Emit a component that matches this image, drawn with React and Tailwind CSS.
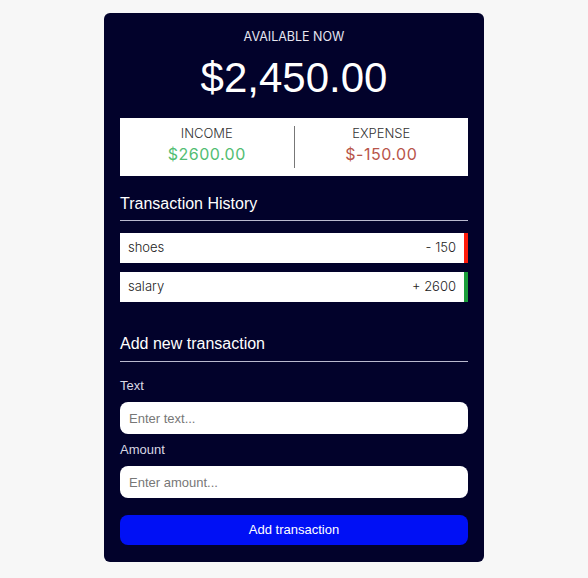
export default function App() {
  const lib = { fontFamily: "'Liberation Sans', Arial, sans-serif" };
  return (
    <div className="min-h-[578px] w-full bg-[#f7f7f7] pt-[13px]" style={{ fontFamily: "Inter, 'Liberation Sans', sans-serif" }}>
      <div className="mx-auto w-[380px] h-[549px] rounded-md bg-[#02022b] px-4 pt-[15px]">
        <div className="text-center text-[12.5px] leading-[18px] text-[#e6e6f0]">AVAILABLE NOW</div>
        <div className="mt-[9px] text-center text-[42px] leading-[46px] text-white" style={lib}>$2,450.00</div>
        <div className="mt-[17px] flex h-[58px] bg-white">
          <div className="flex flex-1 flex-col items-center pt-[7px]">
            <div className="text-[13px] leading-[17px] font-light text-[#333]">INCOME</div>
            <div className="mt-[2px] text-[16px] leading-[20px] tracking-[0.5px] text-[#52bd72]">$2600.00</div>
          </div>
          <div className="my-[8px] w-px bg-[#777]" />
          <div className="flex flex-1 flex-col items-center pt-[7px]">
            <div className="text-[13px] leading-[17px] font-light text-[#333]">EXPENSE</div>
            <div className="mt-[2px] text-[16px] leading-[20px] tracking-[0.5px] text-[#b8554a]">$-150.00</div>
          </div>
        </div>
        <div className="mt-[18px] text-[16px] leading-[20px] text-white" style={lib}>Transaction History</div>
        <div className="mt-[6px] h-px bg-[#b9b9cf]" />
        <div className="mt-[12px] flex h-[30px] items-center justify-between border-r-4 border-[#ff1a0a] bg-white pl-2 pr-2 text-[13px] font-light text-[#222]">
          <span>shoes</span>
          <span>- 150</span>
        </div>
        <div className="mt-[9px] flex h-[30px] items-center justify-between border-r-4 border-[#1a9e3a] bg-white pl-2 pr-2 text-[13px] font-light text-[#222]">
          <span>salary</span>
          <span>+ 2600</span>
        </div>
        <div className="mt-[32px] text-[16px] leading-[20px] text-white" style={lib}>Add new transaction</div>
        <div className="mt-[7px] h-px bg-[#b9b9cf]" />
        <div className="mt-[16px] text-[13px] leading-[16px] text-[#d8d8e4]" style={lib}>Text</div>
        <input
          placeholder="Enter text..."
          className="mt-[8px] block h-[32px] w-full rounded-lg bg-white px-[9px] text-[13px] text-[#333] placeholder:text-[#777] outline-none"
          style={lib}
        />
        <div className="mt-[8px] text-[13px] leading-[16px] text-[#d8d8e4]" style={lib}>Amount</div>
        <input
          placeholder="Enter amount..."
          className="mt-[8px] block h-[32px] w-full rounded-lg bg-white px-[9px] text-[13px] text-[#333] placeholder:text-[#777] outline-none"
          style={lib}
        />
        <button
          className="mt-[17px] block h-[30px] w-full rounded-lg bg-[#0010f5] text-[13px] text-white"
          style={lib}
        >
          Add transaction
        </button>
      </div>
    </div>
  );
}
